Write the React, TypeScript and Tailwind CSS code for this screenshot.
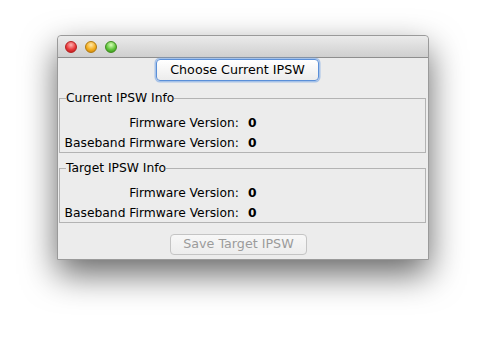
export default function App() {
  const groups = ['Current IPSW Info', 'Target IPSW Info']

  return (
    <div
      className="w-[486px] h-[339px] bg-white pt-[35px] pl-[57px]"
      style={{ fontFamily: '"DejaVu Sans", "Liberation Sans", sans-serif' }}
    >
      <div className="w-[372px] h-[225px] flex flex-col rounded-t-[4px] bg-[#ececec] shadow-[0_14px_34px_rgba(0,0,0,0.6)] border border-[#9a9a9a]">
        <div className="h-[22px] flex items-center gap-[8px] pl-[7px] rounded-t-[4px] bg-gradient-to-b from-[#ebebeb] to-[#cfcfcf] border-b border-[#8e8e8e]">
          <span className="w-[12px] h-[12px] rounded-full border border-[#b51f1f] bg-[radial-gradient(circle_at_50%_30%,#ffb2b2,#e8393b_55%,#b01515)]" />
          <span className="w-[12px] h-[12px] rounded-full border border-[#b07a10] bg-[radial-gradient(circle_at_50%_30%,#ffe9a8,#f4ad1e_55%,#c07c08)]" />
          <span className="w-[12px] h-[12px] rounded-full border border-[#3f8a1e] bg-[radial-gradient(circle_at_50%_30%,#d6ffb6,#5fc43b_55%,#2e8a14)]" />
        </div>

        <div className="flex flex-col pt-[1px] px-[1px]">
          <button className="ml-[97px] w-[163px] h-[22px] rounded-[4px] bg-gradient-to-b from-white to-[#ececec] border border-[#5a8fd8] shadow-[0_0_0_1.5px_rgba(110,160,230,0.55)] text-[12.7px] text-black leading-none">
            Choose Current IPSW
          </button>

          {groups.map((g, gi) => (
            <fieldset
              key={g}
              className={`w-[367px] border border-[#b3b3b3] pb-[2px] ${gi === 0 ? 'mt-[10px]' : 'mt-[8px]'}`}
            >
              <legend className="ml-[6px] px-0 text-[12.3px] leading-[14px] text-black">{g}</legend>
              <div className="grid grid-cols-[176px_auto] gap-x-[9px] gap-y-[6px] pl-[3px] pt-[11px] text-[12.3px] leading-[14px] text-black">
                <span className="text-right whitespace-nowrap">Firmware Version:</span>
                <span className="font-bold">0</span>
                <span className="text-right whitespace-nowrap">Baseband Firmware Version:</span>
                <span className="font-bold">0</span>
              </div>
            </fieldset>
          ))}

          <button
            disabled
            className="mt-[11px] ml-[111px] w-[137px] h-[21px] rounded-[4px] bg-gradient-to-b from-[#f7f7f7] to-[#ededed] border border-[#c4c4c4] text-[12.7px] text-[#9b9b9b] leading-none"
          >
            Save Target IPSW
          </button>
        </div>
      </div>
    </div>
  )
}
